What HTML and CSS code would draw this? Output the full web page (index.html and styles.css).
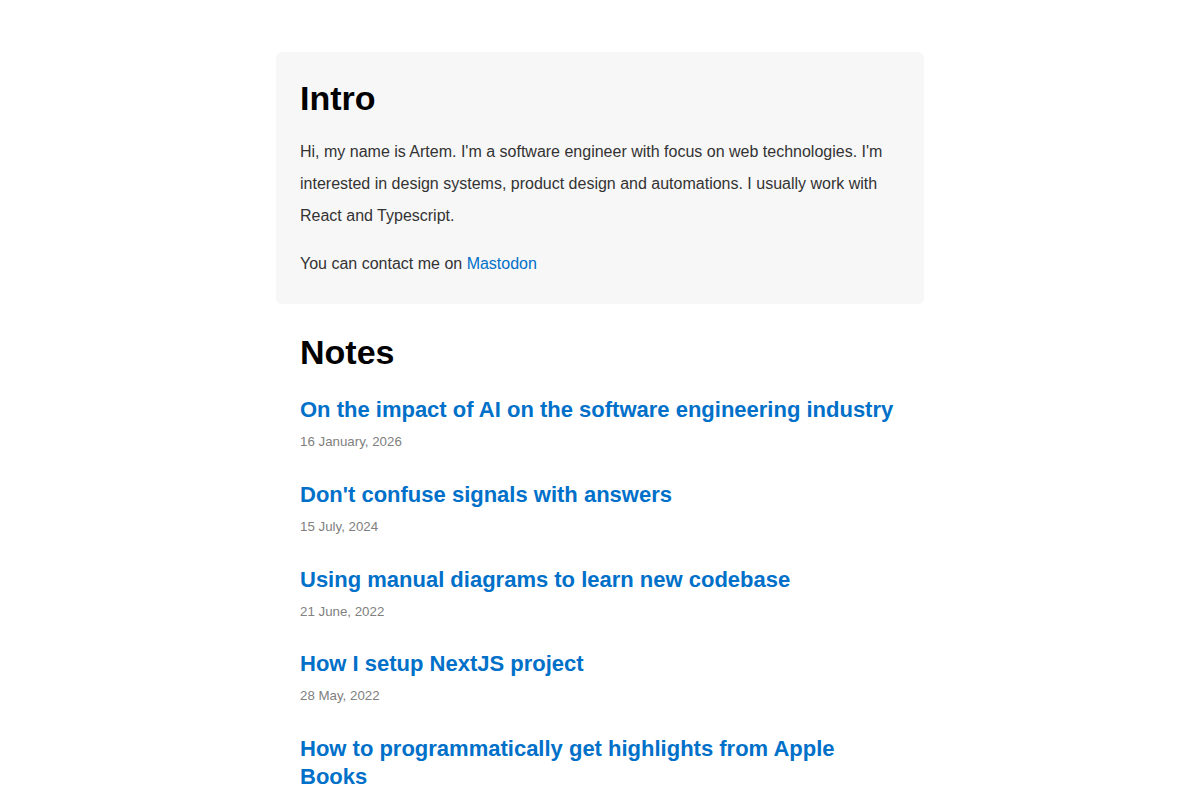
FILE: index.html
```html
<!DOCTYPE html>
<html lang="en">
	<head>
		<meta charset="UTF-8">
		<meta name="viewport" content="width=device-width, initial-scale=1">
		<title>Artem</title>
		<link rel="stylesheet" href="styles.css">
	</head>

	<body>
		<main class="page">
			<section class="intro">
				<h1 class="heading">Intro</h1>
				<p>Hi, my name is Artem. I'm a software engineer with focus on web technologies. I'm interested in design systems, product design and automations. I usually work with React and Typescript.</p>
				<p>You can contact me on <a href="#">Mastodon</a></p>
			</section>

			<section class="notes">
				<h1 class="heading">Notes</h1>
				<ul class="noteList">
					<li class="note">
						<a class="noteTitle" href="#">On the impact of AI on the software engineering industry</a>
						<span class="noteDate">16 January, 2026</span>
					</li>
					<li class="note">
						<a class="noteTitle" href="#">Don't confuse signals with answers</a>
						<span class="noteDate">15 July, 2024</span>
					</li>
					<li class="note">
						<a class="noteTitle" href="#">Using manual diagrams to learn new codebase</a>
						<span class="noteDate">21 June, 2022</span>
					</li>
					<li class="note">
						<a class="noteTitle" href="#">How I setup NextJS project</a>
						<span class="noteDate">28 May, 2022</span>
					</li>
					<li class="note">
						<a class="noteTitle" href="#">How to programmatically get highlights from Apple Books</a>
						<span class="noteDate">12 April, 2022</span>
					</li>
				</ul>
			</section>
		</main>
	</body>
</html>
```

FILE: styles.css
```css
body {
	margin: 0;
	background: #fff;
	color: #333;
	font-family: "Liberation Sans", Arial, sans-serif;
	font-size: 16px;
}

a {
	color: #0070c9;
	text-decoration: none;
}

.page {
	width: 648px;
	margin: 52px auto 0;
}

/*---------------------------INTRO---------------------------*/
.intro {
	background-color: #f7f7f7;
	border-radius: 6px;
	padding: 24px;
}

.intro p {
	margin: 16px 0 0;
	line-height: 32px;
}

.heading {
	margin: 0;
	font-size: 34px;
	line-height: 44px;
	color: #000;
}

/*---------------------------NOTES---------------------------*/
.notes {
	padding: 26px 24px 0;
}

.noteList {
	list-style: none;
	margin: 22px 0 0;
	padding: 0;
}

.note {
	display: flex;
	flex-direction: column;
	align-items: flex-start;
	gap: 8px;
	margin-bottom: 28.75px;
}

.noteTitle {
	font-size: 22px;
	font-weight: bold;
	line-height: 28px;
}

.noteDate {
	font-size: 13.3px;
	line-height: 20px;
	color: #808080;
}
```
